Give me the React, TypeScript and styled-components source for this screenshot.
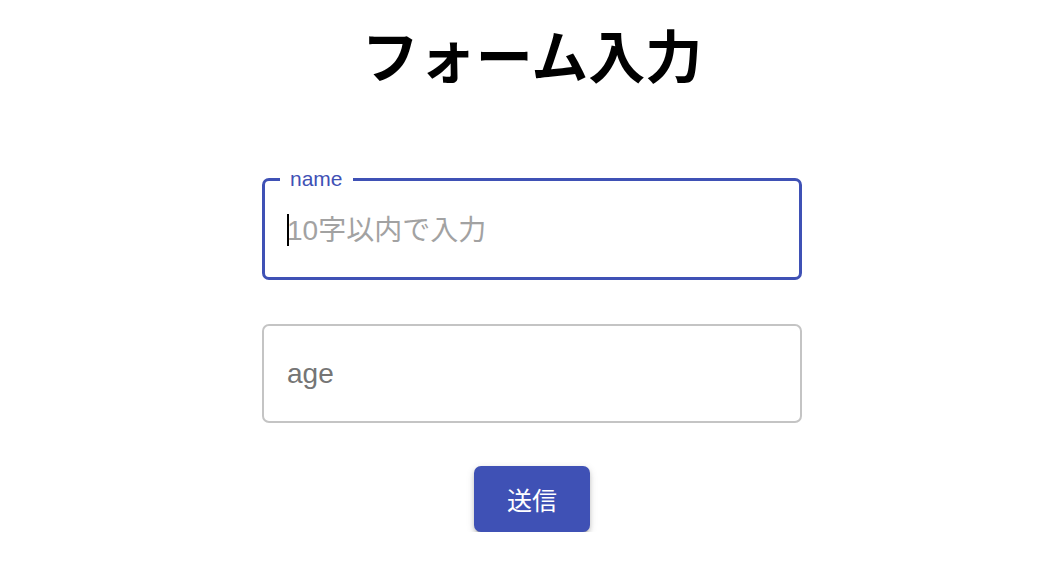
import React, { useState } from 'react';
import styled, { createGlobalStyle, keyframes } from 'styled-components';

const primary = '#3f51b5';
const fontStack = `"Liberation Sans", "Noto Sans CJK JP", sans-serif`;

const GlobalStyle = createGlobalStyle`
  body {
    margin: 0;
    background: #fff;
    font-family: ${fontStack};
    -webkit-font-smoothing: antialiased;
  }
`;

const Page = styled.div`
  display: flex;
  flex-direction: column;
  align-items: center;
  padding-left: 16px;
`;

const Title = styled.h1`
  margin: 18px 0 0;
  font-family: "Noto Sans CJK JP", sans-serif;
  font-size: 57px;
  line-height: 70px;
  font-weight: 700;
  color: #000;
`;

const Form = styled.form`
  display: flex;
  flex-direction: column;
  align-items: center;
  gap: 44px;
  margin-top: 90px;
`;

const Field = styled.div<{ $focused?: boolean }>`
  position: relative;
  box-sizing: border-box;
  width: 540px;
  height: ${p => (p.$focused ? 102 : 99)}px;
  display: flex;
  align-items: center;
  border: ${p => (p.$focused ? `3px solid ${primary}` : '2px solid #c4c4c4')};
  border-radius: 7px;
  padding: 0 ${p => (p.$focused ? 22 : 23)}px;
`;

const FloatLabel = styled.label`
  position: absolute;
  top: -14px;
  left: 15px;
  padding: 0 10px;
  background: #fff;
  font-size: 21px;
  line-height: 24px;
  color: ${primary};
`;

const InlineLabel = styled.label`
  font-size: 28px;
  color: #757575;
`;

const blink = keyframes`
  50% { opacity: 1; }
`;

// static caret shown in the focused, empty field
const Caret = styled.span`
  position: absolute;
  left: 22px;
  top: 33px;
  width: 2px;
  height: 32px;
  background: #000;
  animation: ${blink} 1s step-end infinite;
`;

const Input = styled.input`
  flex: 1;
  border: none;
  outline: none;
  padding: 4px 0 0;
  font-family: ${fontStack};
  font-size: 28px;
  color: rgba(0, 0, 0, 0.87);
  caret-color: transparent;
  background: transparent;

  &::placeholder {
    color: #a2a2a2;
    opacity: 1;
  }
`;

const SubmitButton = styled.button`
  width: 116px;
  height: 66px;
  margin-top: -1px;
  border: none;
  border-radius: 7px;
  cursor: pointer;
  background: ${primary};
  color: #fff;
  font-family: "Noto Sans CJK JP", sans-serif;
  font-size: 25px;
  font-weight: 400;
  box-shadow: 0px 5px 2px -3px rgba(0, 0, 0, 0.22), 0px 3px 4px 0px rgba(0, 0, 0, 0.16),
    0px 2px 8px 0px rgba(0, 0, 0, 0.12);
`;

export default function App() {
  const [name, setName] = useState('');

  return (
    <Page>
      <GlobalStyle />
      <Title>フォーム入力</Title>
      <Form onSubmit={e => e.preventDefault()}>
        <Field $focused>
          <FloatLabel htmlFor="name">name</FloatLabel>
          {name === '' && <Caret />}
          <Input
            id="name"
            value={name}
            placeholder="10字以内で入力"
            onChange={e => setName(e.target.value)}
          />
        </Field>
        <Field>
          <InlineLabel htmlFor="age">age</InlineLabel>
        </Field>
        <SubmitButton type="submit">送信</SubmitButton>
      </Form>
    </Page>
  );
}
